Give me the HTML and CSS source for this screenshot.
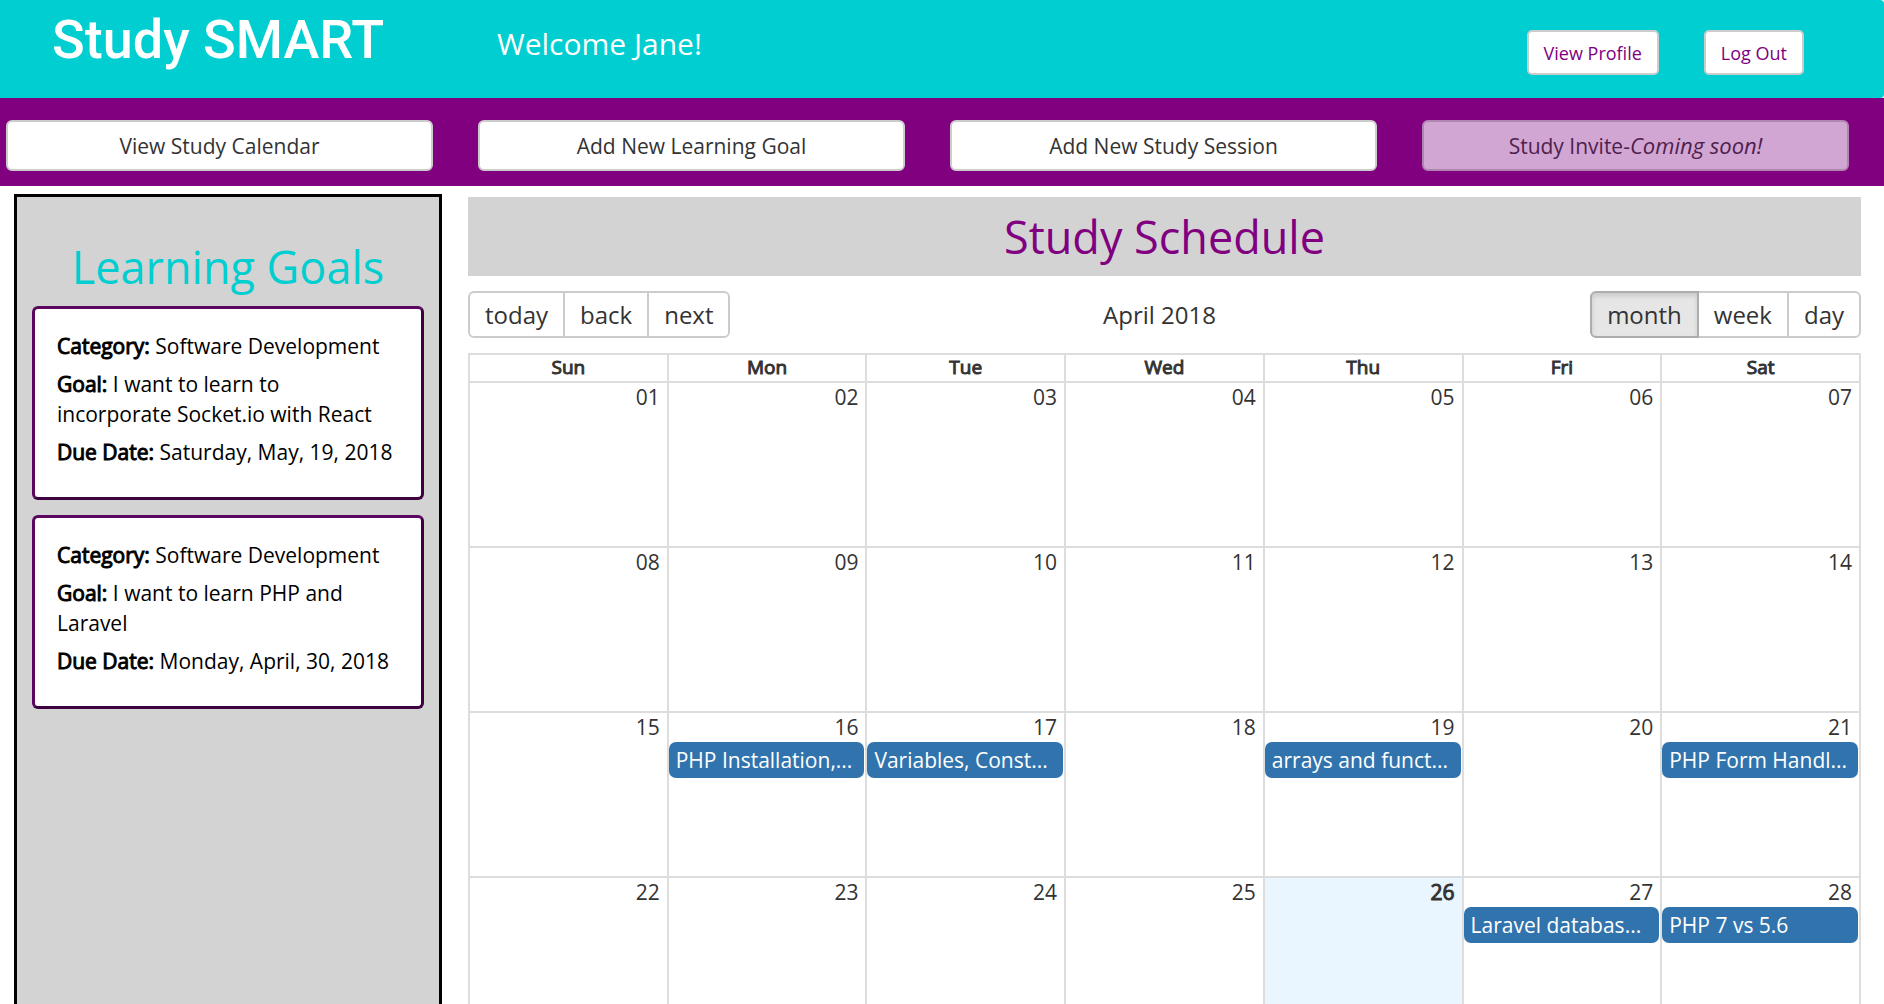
FILE: index.html
```html
<!DOCTYPE html>
<html lang="en">
<head>
<meta charset="utf-8">
<title>Study SMART</title>
<link rel="stylesheet" href="styles.css">
</head>
<body>
<header class="header">
  <div class="logo">Study SMART</div>
  <p class="welcome">Welcome Jane!</p>
  <div class="account">
    <button class="btn btn-small" type="button">View Profile</button>
    <button class="btn btn-small" type="button">Log Out</button>
  </div>
</header>
<nav class="nav">
  <button class="btn" type="button">View Study Calendar</button>
  <button class="btn" type="button">Add New Learning Goal</button>
  <button class="btn" type="button">Add New Study Session</button>
  <button class="btn" type="button" disabled>Study Invite-<em>Coming soon!</em></button>
</nav>
<main class="main">
  <aside class="goals">
    <h2 class="goals-title">Learning Goals</h2>
    <article class="goal">
      <p><b>Category:</b> Software Development</p>
      <p><b>Goal:</b> I want to learn to incorporate Socket.io with React</p>
      <p><b>Due Date:</b> Saturday, May, 19, 2018</p>
    </article>
    <article class="goal">
      <p><b>Category:</b> Software Development</p>
      <p><b>Goal:</b> I want to learn PHP and Laravel</p>
      <p><b>Due Date:</b> Monday, April, 30, 2018</p>
    </article>
  </aside>
  <section class="schedule">
    <h1 class="schedule-title">Study Schedule</h1>
    <div class="toolbar">
      <div class="group">
        <button type="button">today</button><button type="button">back</button><button type="button">next</button>
      </div>
      <span class="toolbar-label">April 2018</span>
      <div class="group group-end">
        <button type="button" class="active">month</button><button type="button">week</button><button type="button">day</button>
      </div>
    </div>
    <table class="calendar">
      <thead>
        <tr><th>Sun</th><th>Mon</th><th>Tue</th><th>Wed</th><th>Thu</th><th>Fri</th><th>Sat</th></tr>
      </thead>
      <tbody>
        <tr><td>01</td><td>02</td><td>03</td><td>04</td><td>05</td><td>06</td><td>07</td></tr>
        <tr><td>08</td><td>09</td><td>10</td><td>11</td><td>12</td><td>13</td><td>14</td></tr>
        <tr>
          <td>15</td>
          <td>16<div class="event">PHP Installation,...</div></td>
          <td>17<div class="event">Variables, Const...</div></td>
          <td>18</td>
          <td>19<div class="event">arrays and funct...</div></td>
          <td>20</td>
          <td>21<div class="event">PHP Form Handl...</div></td>
        </tr>
        <tr>
          <td>22</td><td>23</td><td>24</td><td>25</td>
          <td class="today"><b>26</b></td>
          <td>27<div class="event">Laravel databas...</div></td>
          <td>28<div class="event">PHP 7 vs 5.6</div></td>
        </tr>
      </tbody>
    </table>
  </section>
</main>
</body>
</html>
```
FILE: styles.css
```css
* {
  box-sizing: border-box;
}

body {
  margin: 0;
  height: 100vh;
  display: flex;
  flex-direction: column;
  overflow: hidden;
  background: #fff;
  color: #333;
  font-family: "Open Sans", "Noto Sans", sans-serif;
  font-size: 21px;
  font-weight: 400;
  line-height: 30px;
}

h1, h2, p {
  margin: 0;
  font-weight: 400;
}

button {
  font: inherit;
  color: inherit;
}

/* Labels are the regular face, thickened */
b, th {
  font-weight: 400;
  -webkit-text-stroke: 1px currentColor;
}

.header {
  display: flex;
  flex: none;
  height: 98px;
  padding: 0 80px 0 52px;
  background: #00ced1;
  border-radius: 0 4px 4px 0;
}

.logo {
  width: 445px;
  padding-top: 10px;
  color: #fff;
  font-family: Roboto, sans-serif;
  font-size: 54px;
  font-weight: 500;
  line-height: 60px;
}

.welcome {
  padding-top: 24px;
  color: #fff;
  font-size: 30px;
  line-height: 40px;
}

.account {
  display: flex;
  gap: 45px;
  align-items: flex-start;
  margin-left: auto;
  padding-top: 30px;
}

.btn {
  height: 51px;
  padding: 0 14px;
  background: #fff;
  border: 2px solid #ccc;
  border-radius: 6px;
}

.btn em {
  font-size: 22px;
}

.btn-small {
  height: 45px;
  padding: 0 15px;
  border-radius: 5px;
  color: purple;
  font-size: 18px;
}

.btn:disabled {
  opacity: 0.65;
}

.nav {
  display: grid;
  flex: none;
  grid-template-columns: repeat(4, 1fr);
  gap: 45px;
  height: 88px;
  padding: 22px 35px 0 6px;
  background: purple;
}

.main {
  display: flex;
  flex: 1;
  gap: 26px;
  min-height: 0;
  overflow: hidden;
  padding: 8px 23px 0 14px;
}

.goals {
  width: 428px;
  flex: none;
  padding: 41px 15px 0;
  background: lightgray;
  border: 3px solid #000;
  border-bottom: 0;
}

.goals-title {
  margin-bottom: 10px;
  color: #00ced1;
  font-size: 45px;
  line-height: 58px;
  text-align: center;
}

.goal {
  margin-bottom: 15px;
  padding: 22px;
  background: #fff;
  border: 3px solid;
  border-color: #5c0660 #3d0040 #3d0040 #5c0660;
  border-radius: 6px;
  color: #000;
}

.goal p {
  margin-bottom: 8px;
}

.schedule {
  flex: 1;
  padding-top: 3px;
}

.schedule-title {
  margin-bottom: 15px;
  height: 79px;
  background: lightgray;
  color: purple;
  font-size: 45px;
  line-height: 79px;
  text-align: center;
}

.toolbar {
  display: grid;
  grid-template-columns: 260px 1fr 270px;
  align-items: center;
  margin-bottom: 15px;
  font-size: 24px;
}

.toolbar-label {
  text-align: center;
}

.group {
  display: flex;
}

.group-end {
  justify-content: flex-end;
}

.group button {
  height: 47px;
  padding: 0 15px;
  background: #fff;
  border: 2px solid #ccc;
}

.group button + button {
  margin-left: -2px;
}

.group button:first-child {
  border-radius: 6px 0 0 6px;
}

.group button:last-child {
  border-radius: 0 6px 6px 0;
}

.group .active {
  position: relative;
  background: #e6e6e6;
  border-color: #adadad;
  box-shadow: inset 0 3px 5px rgba(0, 0, 0, 0.125);
}

.calendar {
  width: 100%;
  table-layout: fixed;
  border-collapse: collapse;
}

.calendar th,
.calendar td {
  border: 2px solid #ddd;
  vertical-align: top;
}

.calendar th {
  height: 28px;
  padding: 0;
  font-size: 19px;
  line-height: 25px;
}

.calendar td {
  height: 165px;
  padding: 0 7px 0 0;
  line-height: 29px;
  text-align: right;
}

.calendar .today {
  background: #eaf6ff;
}

.event {
  height: 36px;
  margin-right: -6px;
  padding: 0 7px;
  overflow: hidden;
  background: #3174ad;
  border-radius: 7px;
  color: #fff;
  line-height: 36px;
  text-align: left;
  white-space: nowrap;
}
```
